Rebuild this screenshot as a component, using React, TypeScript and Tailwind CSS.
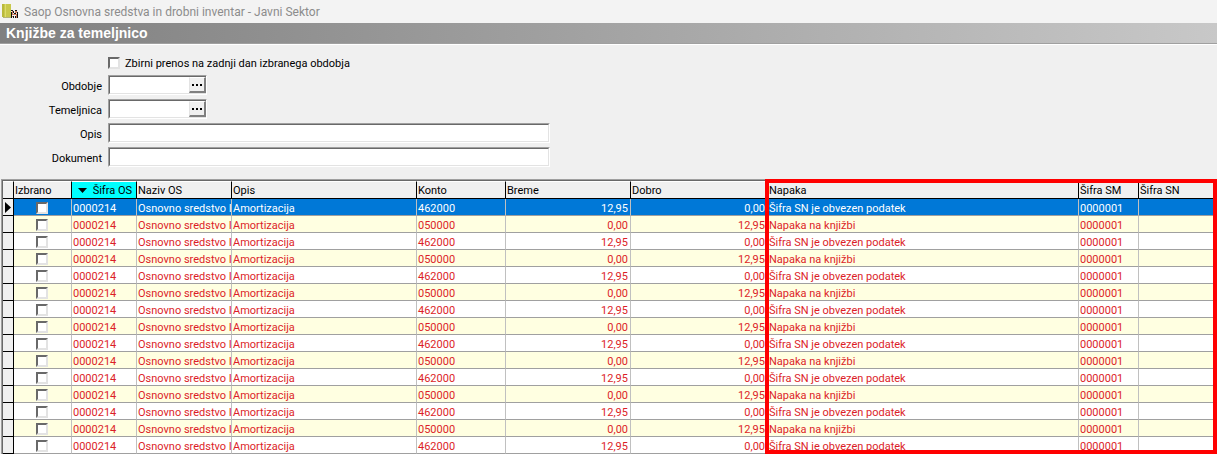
import clsx from "clsx";
import React from "react";

type Entry = {
  konto: string;
  breme: string;
  dobro: string;
  napaka: string;
};

const debit: Entry = {
  konto: "462000",
  breme: "12,95",
  dobro: "0,00",
  napaka: "Šifra SN je obvezen podatek",
};

const credit: Entry = {
  konto: "050000",
  breme: "0,00",
  dobro: "12,95",
  napaka: "Napaka na knjižbi",
};

const entries = Array.from({ length: 15 }, (_, i) =>
  i % 2 === 0 ? debit : credit,
);

const cell =
  "h-[17px] overflow-hidden border-r border-b border-r-[#c0c0c0] border-b-[#a0a0a0] pt-[3px] pr-[2px] pb-0 pl-px leading-[13px] whitespace-nowrap";

const head =
  "h-[18px] overflow-hidden border-t border-r border-b border-t-white border-r-black border-b-black pt-px pr-[2px] pb-0 pl-px text-left font-normal whitespace-nowrap";

const CheckBox: React.FC<{ id?: string; label?: string }> = ({ id, label }) => (
  <input
    id={id}
    type="checkbox"
    aria-label={label}
    className="block size-3 appearance-none border-2 border-t-[#696969] border-r-[#e3e3e3] border-b-[#e3e3e3] border-l-[#696969] bg-white checked:bg-[#696969]"
  />
);

const Field: React.FC<{ id: string; label: string; lookup?: boolean }> = ({
  id,
  label,
  lookup,
}) => (
  <div className="flex h-5 items-center gap-[6px]">
    <label htmlFor={id} className="w-[102px] pt-[3px] text-right">
      {label}
    </label>
    <div
      className={clsx(
        "flex h-5 border border-t-[#a0a0a0] border-r-white border-b-white border-l-[#a0a0a0]",
        lookup ? "w-[99px]" : "w-[442px]",
      )}
    >
      <div
        className={clsx(
          "flex min-w-0 flex-1 border border-t-[#696969] border-b-[#e3e3e3] border-l-[#696969] bg-white",
          lookup ? "border-r-0" : "border-r-[#e3e3e3]",
        )}
      >
        <input
          id={id}
          type="text"
          className="min-w-0 flex-1 px-1 outline-none"
        />
        {lookup && (
          <button
            type="button"
            aria-label={`Izberi ${label}`}
            className="flex w-[17px] items-center justify-center border-t border-r-2 border-b-2 border-l border-t-white border-r-[#808080] border-b-[#808080] border-l-[#e3e3e3] bg-[#f0f0f0]"
          >
            <svg width="10" height="2" shapeRendering="crispEdges">
              <path d="M0 0h2v2H0zM4 0h2v2H4zM8 0h2v2H8z" />
            </svg>
          </button>
        )}
      </div>
    </div>
  </div>
);

const AppIcon = () => (
  <svg width="17" height="16" viewBox="0 0 17 16" shapeRendering="crispEdges">
    <path d="M1 0h9v13H1z" fill="#c8c84b" />
    <path d="M1 0h2v13H1z" fill="#b9b93c" />
    <path d="M4 0h1v13H4z" fill="#dcdc6e" />
    <path d="M2 13h8v1H2z" fill="#b4b478" />
    <path
      d="M10 6h2v1h-2zM10 8h1v6h-1zM12 7h1v2h-1zM13 9h2v1h-2zM16 8h1v6h-1zM12 12h1v2h-1zM14 12h1v2h-1zM14 6h2v1h-2z"
      fill="#101010"
    />
    <path
      d="M11 7h1v4h-1zM12 10h3v1h-3zM14 7h2v2h-2zM15 10h1v4h-1zM11 12h1v1h-1z"
      fill="#d08060"
    />
  </svg>
);

export default function App() {
  return (
    <div className="min-h-screen bg-[#f0f0f0] font-['Roboto',sans-serif] text-[11px] leading-[14px] text-black">
      <header className="flex h-[23px] items-center gap-[6px] bg-[#f3f3f3] pt-px pl-px text-[12px] text-[#8c8c8c]">
        <AppIcon />
        Saop Osnovna sredstva in drobni inventar - Javni Sektor
      </header>
      <div className="border-b border-white">
        <h1 className="h-[21px] border-b border-[#a0a0a0] bg-linear-to-r from-[#808080] to-[#c8c8c8] pl-[6px] font-['Liberation_Sans',sans-serif] text-[14px] leading-[21px] font-bold text-white">
          Knjižbe za temeljnico
        </h1>
      </div>

      <form className="flex flex-col gap-1 py-3">
        <div className="mb-[2px] flex h-3 items-center gap-[5px] pl-[108px]">
          <CheckBox id="zbirni" />
          <label htmlFor="zbirni" className="pt-[2px]">
            Zbirni prenos na zadnji dan izbranega obdobja
          </label>
        </div>
        <Field id="obdobje" label="Obdobje" lookup />
        <Field id="temeljnica" label="Temeljnica" lookup />
        <Field id="opis" label="Opis" />
        <Field id="dokument" label="Dokument" />
      </form>

      <div className="relative">
        <div className="ml-px border-t border-l border-[#a0a0a0]">
          <div className="border-t border-l border-[#696969] bg-white">
            <table className="w-full table-fixed border-separate border-spacing-0">
              <colgroup>
                <col className="w-[11px]" />
                <col className="w-[58px]" />
                <col className="w-[65px]" />
                <col className="w-[95px]" />
                <col className="w-[185px]" />
                <col className="w-[89px]" />
                <col className="w-[125px]" />
                <col className="w-[137px]" />
                <col className="w-[311px]" />
                <col className="w-[60px]" />
                <col />
              </colgroup>
              <thead className="bg-[#f0f0f0]">
                <tr>
                  <th className={head} />
                  <th className={head}>Izbrano</th>
                  <th className={clsx(head, "bg-[#00ffff]")}>
                    <span className="flex items-center justify-between pr-[2px] pl-[5px]">
                      <svg width="9" height="5">
                        <path d="M0 0h9L4.500 5z" />
                      </svg>
                      Šifra OS
                    </span>
                  </th>
                  <th className={head}>Naziv OS</th>
                  <th className={head}>Opis</th>
                  <th className={head}>Konto</th>
                  <th className={head}>Breme</th>
                  <th className={head}>Dobro</th>
                  <th className={head}>Napaka</th>
                  <th className={head}>Šifra SM</th>
                  <th className={head}>Šifra SN</th>
                </tr>
              </thead>
              <tbody>
                {entries.map((entry, i) => (
                  <tr
                    key={i}
                    className={clsx(
                      i === 0 ? "bg-[#0078d7] text-white" : "text-[#dc1e28]",
                      i % 2 === 1 && "bg-[#ffffe1]",
                    )}
                  >
                    <td className="h-[17px] border-r border-b border-black bg-[#f0f0f0] p-0 pl-[2px]">
                      {i === 0 && (
                        <svg width="6" height="11" className="block">
                          <path d="M0 0l6 5.500L0 11z" fill="black" />
                        </svg>
                      )}
                    </td>
                    <td className={cell}>
                      <div className="flex h-[13px] justify-center pr-px">
                        <CheckBox label={`Izbrano ${i + 1}`} />
                      </div>
                    </td>
                    <td className={cell}>0000214</td>
                    <td className={cell}>Osnovno sredstvo I</td>
                    <td className={cell}>Amortizacija</td>
                    <td className={cell}>{entry.konto}</td>
                    <td className={clsx(cell, "text-right")}>{entry.breme}</td>
                    <td className={clsx(cell, "text-right")}>{entry.dobro}</td>
                    <td className={cell}>{entry.napaka}</td>
                    <td className={cell}>0000001</td>
                    <td className={cell} />
                  </tr>
                ))}
              </tbody>
            </table>
          </div>
        </div>
        {/* highlights the error columns */}
        <div className="pointer-events-none absolute inset-y-0 right-0 left-[765px] border-4 border-[#ff0000]" />
      </div>
    </div>
  );
}
